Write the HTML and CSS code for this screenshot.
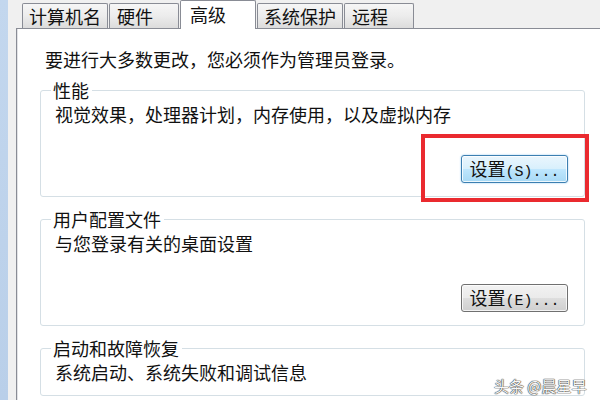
FILE: index.html
```html
<!DOCTYPE html>
<html lang="zh-CN">
<head>
    <meta charset="UTF-8">
    <meta name="viewport" content="width=device-width, initial-scale=1.0">
    <title>系统属性 - 高级</title>
    <link rel="stylesheet" href="styles.css">
</head>
<body>
    <div class="screen">
        <div class="edge"></div>
        <div class="dialog">
            <div class="tabs">
                <div class="tab">计算机名</div>
                <div class="tab tab-short">硬件</div>
                <div class="tab active">高级</div>
                <div class="tab">系统保护</div>
                <div class="tab tab-short">远程</div>
            </div>

            <div class="panel">
                <p class="notice">要进行大多数更改，您必须作为管理员登录。</p>

                <fieldset class="group">
                    <legend>性能</legend>
                    <p class="desc">视觉效果，处理器计划，内存使用，以及虚拟内存</p>
                    <div class="actions">
                        <button class="btn focused">设置<span class="key">(S)...</span></button>
                    </div>
                </fieldset>

                <fieldset class="group">
                    <legend>用户配置文件</legend>
                    <p class="desc">与您登录有关的桌面设置</p>
                    <div class="actions">
                        <button class="btn">设置<span class="key">(E)...</span></button>
                    </div>
                </fieldset>

                <fieldset class="group">
                    <legend>启动和故障恢复</legend>
                    <p class="desc">系统启动、系统失败和调试信息</p>
                </fieldset>
            </div>
        </div>

        <!-- 红框标注 -->
        <div class="highlight"></div>
        <div class="watermark">头条 @晨星早</div>
    </div>
</body>
</html>
```

FILE: styles.css
```css
* {
    margin: 0;
    padding: 0;
    box-sizing: border-box;
}

body {
    width: 600px;
    height: 400px;
    overflow: hidden;
    background: #f0f0f0;
    font-family: "Noto Sans CJK SC", "DejaVu Sans", sans-serif;
    font-size: 18px;
    color: #111;
}

.screen {
    position: relative;
    display: flex;
    width: 600px;
    height: 400px;
    overflow: hidden;
}

.edge {
    width: 8px;
    flex-shrink: 0;
    background: linear-gradient(180deg, #c3d7ee, #b9cfe9);
}

.dialog {
    flex: 1;
    padding-left: 8px;
    display: flex;
    flex-direction: column;
}

/* 选项卡 */
.tabs {
    height: 28px;
    display: flex;
    align-items: flex-end;
    gap: 1px;
    padding-left: 6px;
}

.tab {
    height: 25px;
    padding: 1px 6px 0 6px;
    line-height: 22px;
    border: 1px solid #898c95;
    border-bottom: none;
    border-radius: 2px 2px 0 0;
    background: linear-gradient(180deg, #f6f6f6 0%, #ececec 50%, #dcdcdc 100%);
    white-space: nowrap;
}

.tab-short {
    min-width: 70px;
    padding-left: 7px;
}

.tab.active {
    position: relative;
    z-index: 1;
    width: 76px;
    height: 29px;
    margin-bottom: -1px;
    padding: 2px 0 0 9px;
    background: #fff;
}

/* 内容面板 */
.panel {
    flex: 1;
    background: #fff;
    border-top: 1px solid #898c95;
    border-left: 1px solid #898c95;
    box-shadow: inset 1px 0 0 #e2e3e6;
    padding: 20px 0 0 23px;
}

.notice {
    line-height: 20px;
    margin: 0 0 11px 5px;
}

.group {
    width: 545px;
    border: 1px solid #d5dfe5;
    border-radius: 3px;
    padding: 4px 16px 13px 14px;
    margin: 0 0 12px 0;
    min-inline-size: 0;
}

.group legend {
    line-height: 20px;
    padding: 0 3px 0 2px;
    margin-left: -4px;
}

.desc {
    line-height: 20px;
}

.actions {
    display: flex;
    justify-content: flex-end;
    margin-top: 31px;
}

.btn {
    width: 107px;
    height: 28px;
    font-family: inherit;
    font-size: 18px;
    line-height: 24px;
    color: #111;
    border: 1px solid #707070;
    border-radius: 3px;
    background: linear-gradient(180deg, #f2f2f2 0%, #ebebeb 48%, #dddddd 52%, #cfcfcf 100%);
    box-shadow: inset 0 0 0 1px rgba(255, 255, 255, 0.75);
}

.btn.focused {
    border-color: #3c7fb1;
    background: linear-gradient(180deg, #eaf6fd 0%, #d9f0fc 48%, #bee6fd 52%, #a7d9f5 100%);
    box-shadow: inset 0 0 0 1px rgba(255, 255, 255, 0.8), 0 0 2px #8cc7ee;
}

.key {
    font-family: "Liberation Mono", monospace;
    font-size: 15px;
}

/* 标注 */
.highlight {
    position: absolute;
    left: 421px;
    top: 134px;
    width: 168px;
    height: 68px;
    border: 4px solid #ea2a2f;
}

.watermark {
    position: absolute;
    left: 494px;
    top: 376px;
    font-size: 15px;
    line-height: 20px;
    color: #f7f7f7;
    text-shadow: 0 0 1px #333, 0 0 1px #333, 0 0 1px #555;
}
```
